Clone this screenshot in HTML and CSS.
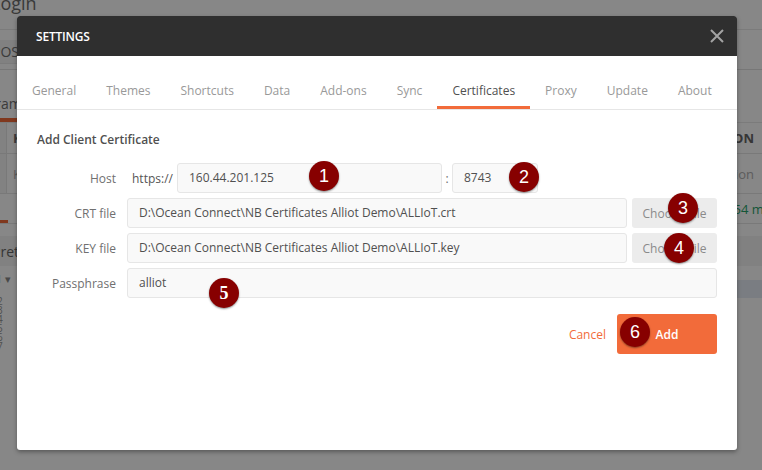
FILE: index.html
```html
<!DOCTYPE html>
<html>
<head>
<meta charset="utf-8">
<link rel="stylesheet" href="styles.css">
</head>
<body>
<div class="app">
  <div class="app-title"><span class="app-title-text">Login</span></div>
  <div class="app-url"><span class="method">POST</span></div>
  <div class="app-tabs"><span class="app-tab">Params</span></div>
  <div class="app-table">
    <div class="trow thead"><span class="cell-chk"></span><span class="cell-key">KEY</span><span class="cell-desc">DESCRIPTION</span></div>
    <div class="trow"><span class="cell-chk"></span><span class="cell-key ph">Key</span><span class="cell-desc ph">Description</span></div>
  </div>
  <div class="app-resp"><span class="resp-tab"></span><span class="resp-time">154 ms</span></div>
  <div class="app-gap"></div>
  <div class="app-pretty"><span class="pretty-text">Pretty</span></div>
  <div class="app-fmt"><span class="fmt-sel">1 ▾</span><span class="fmt-band"></span></div>
  <div class="app-code">
    <div class="ln">2</div><div class="ln">3</div><div class="ln">4</div><div class="ln">5</div><div class="ln">6</div><div class="ln">7</div>
  </div>
</div>

<div class="overlay">
  <div class="modal">
    <div class="modal-header">
      <span class="modal-title">SETTINGS</span>
      <svg class="close" width="14" height="14" viewBox="0 0 14 14"><path d="M1 1L13 13M13 1L1 13" stroke="#a3a3a3" stroke-width="2" fill="none"/></svg>
    </div>
    <div class="tabs">
      <span class="tab">General</span>
      <span class="tab">Themes</span>
      <span class="tab">Shortcuts</span>
      <span class="tab">Data</span>
      <span class="tab">Add-ons</span>
      <span class="tab">Sync</span>
      <span class="tab active">Certificates</span>
      <span class="tab">Proxy</span>
      <span class="tab">Update</span>
      <span class="tab">About</span>
    </div>
    <div class="modal-body">
      <div class="section-title">Add Client Certificate</div>
      <div class="form">
        <div class="row">
          <label class="lbl">Host</label>
          <span class="prefix">https://</span>
          <div class="input host">160.44.201.125</div>
          <span class="colon">:</span>
          <div class="input port">8743</div>
        </div>
        <div class="row">
          <label class="lbl">CRT file</label>
          <div class="input file">D:\Ocean Connect\NB Certificates Alliot Demo\ALLIoT.crt</div>
          <button class="choose">Choose File</button>
        </div>
        <div class="row">
          <label class="lbl">KEY file</label>
          <div class="input file">D:\Ocean Connect\NB Certificates Alliot Demo\ALLIoT.key</div>
          <button class="choose">Choose File</button>
        </div>
        <div class="row">
          <label class="lbl">Passphrase</label>
          <div class="input pass">alliot</div>
        </div>
      </div>
      <div class="footer">
        <span class="cancel">Cancel</span>
        <button class="add">Add</button>
      </div>
    </div>
    <span class="badge b1">1</span>
    <span class="badge b2">2</span>
    <span class="badge b3">3</span>
    <span class="badge b4">4</span>
    <span class="badge b5">5</span>
    <span class="badge b6">6</span>
  </div>
</div>
</body>
</html>
```

FILE: styles.css
```css
* { box-sizing: border-box; }
html, body { margin: 0; padding: 0; }
body {
  width: 762px;
  height: 470px;
  overflow: hidden;
  font-family: "Open Sans", "Noto Sans", sans-serif;
  position: relative;
}

/* ---------- background app ---------- */
.app {
  width: 762px;
  height: 470px;
  background: #ffffff;
  overflow: hidden;
}
.app-title {
  height: 30px;
  border-bottom: 1px solid #e8e8e8;
  font-size: 18px;
  line-height: 20px;
  color: #6e6e6e;
  overflow: hidden;
}
.app-title-text { display: block; margin-left: -9px; margin-top: -7px; }
.app-url {
  height: 40px;
  border-bottom: 1px solid #e0e0e0;
  display: flex;
  align-items: center;
}
.method {
  display: inline-block;
  margin-left: -12px;
  height: 24px;
  width: 40px;
  line-height: 24px;
  font-size: 14px;
  color: #707070;
  background: #f3f3f3;
  border-bottom: 1px solid #e8e8e8;
  padding-left: 4px;
  margin-top: 4px;
}
.app-tabs {
  height: 52px;
  display: flex;
  align-items: flex-end;
}
.app-tab {
  display: inline-block;
  margin-left: -25px;
  padding: 0 4px;
  font-size: 14px;
  color: #707070;
  height: 31px;
  line-height: 26px;
  border-bottom: 4px solid #f26b3a;
}
.app-table { border-top: 1px solid #e8e8e8; }
.trow {
  display: flex;
  height: 31px;
  border-bottom: 1px solid #e4e4e4;
  align-items: center;
  font-size: 13px;
}
.trow + .trow { height: 40px; }
.cell-chk {
  width: 7px;
  height: 100%;
  border-right: 1px solid #e4e4e4;
  background: #f6f6f6;
}
.cell-key {
  padding-left: 6px;
  color: #707070;
  font-weight: 700;
  width: 100px;
}
.cell-desc {
  margin-left: auto;
  margin-right: 8px;
  font-weight: 700;
  color: #666;
}
.ph { font-weight: 400; color: #b0b0b0; }
.app-resp {
  height: 30px;
  border-bottom: 1px solid #e4e4e4;
  display: flex;
  align-items: center;
}
.resp-tab {
  align-self: flex-end;
  width: 8px;
  height: 3px;
  background: #f26b3a;
}
.resp-time {
  margin-left: auto;
  margin-right: -8px;
  font-size: 13px;
  color: #28a26b;
  white-space: nowrap;
}
.app-gap { height: 12px; }
.app-pretty {
  height: 30px;
  background: #f4f4f4;
  display: flex;
  align-items: center;
  font-size: 14px;
  color: #666;
}
.pretty-text { margin-left: -8px; }
.app-fmt {
  height: 25px;
  display: flex;
  align-items: center;
  font-size: 11px;
  color: #888;
}
.fmt-sel { margin-left: -4px; width: 40px; }
.fmt-band {
  margin-left: auto;
  width: 30px;
  height: 18px;
  margin-top: 20px;
  background: #e6ecf5;
}
.app-code { padding-top: 6px; }
.ln { font-size: 10px; line-height: 9px; color: #999; margin-left: -3px; }

/* ---------- overlay + modal ---------- */
.overlay {
  position: absolute;
  inset: 0;
  background: rgba(0, 0, 0, 0.47);
}
.modal {
  position: absolute;
  left: 17px;
  top: 16px;
  width: 720px;
  height: 434px;
  background: #ffffff;
  border-radius: 3px;
  box-shadow: 0 2px 4px rgba(0, 0, 0, 0.35);
}
.modal-header {
  height: 40px;
  background: #2f2f2f;
  border-radius: 3px 3px 0 0;
  display: flex;
  align-items: center;
  justify-content: space-between;
  padding: 0 13px 0 19px;
}
.modal-title {
  color: #ffffff;
  font-size: 12px;
  font-weight: 600;
  letter-spacing: -0.2px;
}
.close { display: block; }

.tabs {
  display: flex;
  padding-top: 15px;
  border-bottom: 1px solid #e6e6e6;
}
.tab {
  height: 38px;
  line-height: 36px;
  padding: 2px 15px 0 15px;
  font-size: 12px;
  color: #999999;
}
.tab.active {
  color: #505050;
  box-shadow: inset 0 -3px 0 #f26b3a;
}

.modal-body { padding: 21px 20px 0 20px; }
.section-title {
  font-size: 12px;
  line-height: 17px;
  font-weight: 600;
  color: #505050;
}
.form {
  margin-top: 15px;
  display: flex;
  flex-direction: column;
  gap: 5px;
}
.row {
  display: flex;
  align-items: center;
  height: 30px;
}
.lbl {
  width: 79px;
  margin-right: 11px;
  text-align: right;
  font-size: 12px;
  color: #707070;
}
.prefix {
  font-size: 12px;
  color: #555;
  width: 50px;
  padding-left: 5px;
}
.input {
  height: 30px;
  line-height: 28px;
  background: #f9f9f9;
  border: 1px solid #e6e6e6;
  border-radius: 3px;
  padding: 0 11px;
  font-size: 12px;
  color: #505050;
  white-space: nowrap;
  overflow: hidden;
}
.host { width: 265px; }
.colon {
  width: 10px;
  text-align: center;
  font-size: 12px;
  color: #707070;
}
.port { width: 86px; }
.file { width: 500px; }
.pass { width: 590px; }
.choose {
  margin-left: 5px;
  width: 85px;
  height: 30px;
  border: none;
  border-radius: 3px;
  background: #ececec;
  font-family: "Open Sans", "Noto Sans", sans-serif;
  font-size: 12px;
  color: #8a8a8a;
  padding: 0;
}
.footer {
  margin-top: 16px;
  display: flex;
  justify-content: flex-end;
  align-items: center;
  gap: 11px;
}
.cancel {
  font-size: 12px;
  color: #f26b3a;
}
.add {
  width: 100px;
  height: 40px;
  border: none;
  border-radius: 3px;
  background: #f26b3a;
  color: #ffffff;
  font-family: "Open Sans", "Noto Sans", sans-serif;
  font-size: 12px;
  font-weight: 600;
  padding: 0;
}

/* annotation badges */
.badge {
  position: absolute;
  width: 30px;
  height: 30px;
  border-radius: 50%;
  background: #870000;
  color: #ffffff;
  font-family: "Liberation Sans", Arial, sans-serif;
  font-size: 18px;
  line-height: 30px;
  text-align: center;
  box-shadow: 0 1px 2px rgba(0, 0, 0, 0.45);
}
.b1 { left: 292px; top: 145px; }
.b2 { left: 492px; top: 146px; }
.b3 { left: 651px; top: 177px; }
.b4 { left: 647px; top: 217px; }
.b5 { left: 192px; top: 262px; font-family: "Liberation Serif", serif; font-weight: 700; }
.b6 { left: 603px; top: 301px; }
```
